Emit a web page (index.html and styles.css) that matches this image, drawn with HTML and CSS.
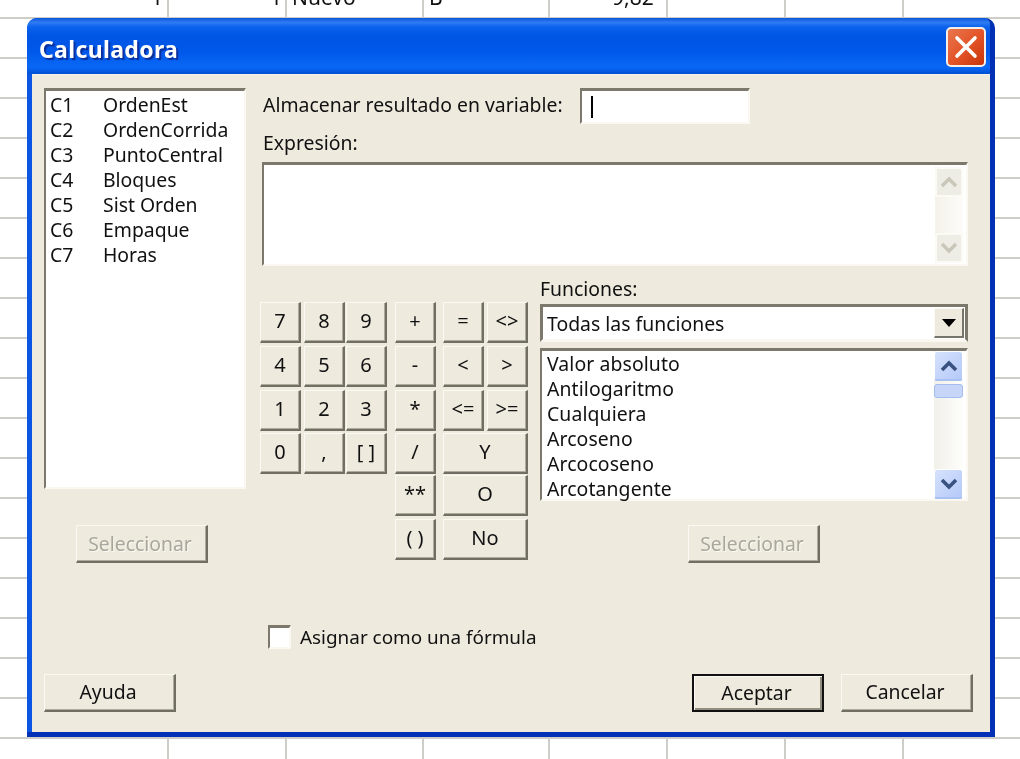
FILE: index.html
```html
<!DOCTYPE html>
<html lang="es">
<head>
  <meta charset="utf-8">
  <title>Calculadora</title>
  <link rel="stylesheet" href="styles.css">
</head>
<body>
  <div class="sheet">
    <div class="sheet-row">
      <span class="cell-a">1</span>
      <span class="cell-b">1</span>
      <span class="cell-c">Nuevo</span>
      <span class="cell-d">B</span>
      <span class="cell-e">9,82</span>
    </div>
    <div class="sheet-col col-1"></div>
    <div class="sheet-col col-2"></div>
    <div class="sheet-col col-3"></div>
    <div class="sheet-col col-4"></div>
    <div class="sheet-col col-5"></div>
    <div class="sheet-col col-6"></div>
    <div class="sheet-col col-7"></div>
  </div>

  <div class="window">
    <div class="titlebar">
      <span class="title">Calculadora</span>
      <div class="close">
        <svg width="30" height="30" viewBox="0 0 30 30">
          <path d="M6 6 L24 24 M24 6 L6 24" stroke="#fff" stroke-width="3.6" stroke-linecap="round"/>
        </svg>
      </div>
    </div>

    <div class="dialog">
      <div class="main">
        <div class="left-column">
          <ul class="sunken var-list">
            <li><span class="var-id">C1</span>OrdenEst</li>
            <li><span class="var-id">C2</span>OrdenCorrida</li>
            <li><span class="var-id">C3</span>PuntoCentral</li>
            <li><span class="var-id">C4</span>Bloques</li>
            <li><span class="var-id">C5</span>Sist Orden</li>
            <li><span class="var-id">C6</span>Empaque</li>
            <li><span class="var-id">C7</span>Horas</li>
          </ul>
          <div class="btn btn-disabled select-left">Seleccionar</div>
        </div>

        <div class="right-column">
          <div class="store-row">
            <label>Almacenar resultado en variable:</label>
            <div class="sunken store-input"><span class="caret"></span></div>
          </div>

          <label class="expr-label">Expresión:</label>
          <div class="sunken expr-box">
            <div class="scroll-off">
              <div class="arrow-off">
                <svg width="20" height="14" viewBox="0 0 20 14"><path d="M3 11 L10 4 L17 11" fill="none" stroke="#c9c7ba" stroke-width="3.4"/></svg>
              </div>
              <div class="arrow-off">
                <svg width="20" height="14" viewBox="0 0 20 14"><path d="M3 3 L10 10 L17 3" fill="none" stroke="#c9c7ba" stroke-width="3.4"/></svg>
              </div>
            </div>
          </div>

          <div class="calc-row">
            <div class="keypad">
              <div class="btn key">7</div>
              <div class="btn key">8</div>
              <div class="btn key">9</div>
              <div class="btn key">+</div>
              <div class="btn key">=</div>
              <div class="btn key">&lt;&gt;</div>
              <div class="btn key">4</div>
              <div class="btn key">5</div>
              <div class="btn key">6</div>
              <div class="btn key">-</div>
              <div class="btn key">&lt;</div>
              <div class="btn key">&gt;</div>
              <div class="btn key">1</div>
              <div class="btn key">2</div>
              <div class="btn key">3</div>
              <div class="btn key">*</div>
              <div class="btn key">&lt;=</div>
              <div class="btn key">&gt;=</div>
              <div class="btn key">0</div>
              <div class="btn key">,</div>
              <div class="btn key">[ ]</div>
              <div class="btn key">/</div>
              <div class="btn key key-wide">Y</div>
              <div class="btn key key-op">**</div>
              <div class="btn key key-wide">O</div>
              <div class="btn key key-op">( )</div>
              <div class="btn key key-wide">No</div>
            </div>

            <div class="functions">
              <label class="func-label">Funciones:</label>
              <div class="sunken func-select">
                <span>Todas las funciones</span>
                <div class="combo-btn">
                  <svg width="14" height="8" viewBox="0 0 14 8"><path d="M0 0 H14 L7 8 Z" fill="#000"/></svg>
                </div>
              </div>
              <div class="sunken func-list">
                <ul>
                  <li>Valor absoluto</li>
                  <li>Antilogaritmo</li>
                  <li>Cualquiera</li>
                  <li>Arcoseno</li>
                  <li>Arcocoseno</li>
                  <li>Arcotangente</li>
                </ul>
                <div class="scroll-on">
                  <div class="arrow-on">
                    <svg width="20" height="14" viewBox="0 0 20 14"><path d="M3 11 L10 4 L17 11" fill="none" stroke="#3a5280" stroke-width="3.6"/></svg>
                  </div>
                  <div class="thumb"></div>
                  <div class="track"></div>
                  <div class="arrow-on">
                    <svg width="20" height="14" viewBox="0 0 20 14"><path d="M3 3 L10 10 L17 3" fill="none" stroke="#3a5280" stroke-width="3.6"/></svg>
                  </div>
                </div>
              </div>
              <div class="btn btn-disabled select-right">Seleccionar</div>
            </div>
          </div>

          <div class="formula-row">
            <div class="sunken checkbox"></div>
            <label>Asignar como una fórmula</label>
          </div>
        </div>
      </div>

      <div class="footer">
        <div class="btn footer-btn">Ayuda</div>
        <div class="footer-right">
          <div class="btn footer-btn btn-default">Aceptar</div>
          <div class="btn footer-btn">Cancelar</div>
        </div>
      </div>
    </div>
  </div>
</body>
</html>
```

FILE: styles.css
```css
html, body {
  margin: 0;
  height: 100%;
}
body {
  position: relative;
  width: 1020px;
  height: 759px;
  overflow: hidden;
  background: #fff;
  font-family: "Noto Sans", "DejaVu Sans", sans-serif;
  font-size: 19.4px;
  color: #111;
}
ul {
  list-style: none;
  margin: 0;
  padding: 0;
}
label {
  display: block;
}

/* spreadsheet behind the dialog */
.sheet {
  position: absolute;
  inset: 0;
  background: repeating-linear-gradient(to bottom, transparent 0, transparent 17px, #cfcdc8 17px, #cfcdc8 19px, transparent 19px, transparent 40px);
  filter: blur(0.5px);
}
.sheet-row span {
  position: absolute;
  top: -15px;
  line-height: 24px;
  font-size: 21px;
}
.cell-a { left: 151px; }
.cell-b { left: 270px; }
.cell-c { left: 292px; }
.cell-d { left: 429px; }
.cell-e { left: 612px; }
.sheet-col {
  position: absolute;
  top: 0;
  bottom: 0;
  width: 2px;
  background: #cfcdc8;
}
.col-1 { left: 167px; }
.col-2 { left: 285px; }
.col-3 { left: 422px; }
.col-4 { left: 548px; }
.col-5 { left: 666px; }
.col-6 { left: 784px; }
.col-7 { left: 902px; }

/* window frame */
.window {
  position: absolute;
  left: 27px;
  top: 18px;
  box-sizing: border-box;
  width: 968px;
  height: 719px;
  display: flex;
  flex-direction: column;
  border-radius: 10px 10px 0 0;
  border-right: 5px solid #0030b4;
  border-bottom: 5px solid #0430b8;
  background: #0a55e4;
  filter: blur(0.5px);
}
.titlebar {
  height: 56px;
  flex-shrink: 0;
  display: flex;
  align-items: center;
  justify-content: space-between;
  padding: 0 4px 0 12px;
  border-radius: 10px 6px 0 0;
  background: linear-gradient(to bottom, #0a56dc 0, #2f7bf2 8%, #0a62ee 16%, #0055e4 32%, #0058ea 60%, #0a68f6 88%, #0050d4 100%);
}
.title {
  padding-top: 5px;
  font-weight: 700;
  font-size: 23px;
  letter-spacing: 0.35px;
  color: #fff;
  text-shadow: 2px 2px 1px #0a2f9c;
}
.close {
  width: 36px;
  height: 36px;
  margin-top: 2px;
  display: flex;
  align-items: center;
  justify-content: center;
  border: 2px solid #f4efe9;
  border-radius: 5px;
  background: linear-gradient(135deg, #e8774e 0, #e4552a 50%, #c83408 100%);
}
.dialog {
  flex: 1;
  margin-left: 5px;
  display: flex;
  flex-direction: column;
  padding: 13px 17px 21px 12px;
  background: #eeeade;
  border-top: 1px solid #f5f2ea;
}
.main {
  flex: 1;
  display: flex;
  gap: 15px;
}

/* shared widgets */
.sunken {
  box-sizing: border-box;
  background: #fff;
  border-style: solid;
  border-width: 3px 2px 2px 2px;
  border-color: #7c796c #fbf8f2 #fbf8f2 #7c796c;
}
.btn {
  box-sizing: border-box;
  display: flex;
  align-items: center;
  justify-content: center;
  background: #eeeade;
  border-style: solid;
  border-width: 1px 2px 2px 1px;
  border-color: #fbf9f3 #716f64 #716f64 #fbf9f3;
  box-shadow: inset -1px -1px 0 #aeab9c;
}
.btn-disabled {
  width: 132px;
  height: 38px;
  padding-right: 3px;
  color: #a9a79b;
  text-shadow: 1px 1px 0 #fbf9f3;
}

/* left column */
.left-column {
  width: 202px;
  display: flex;
  flex-direction: column;
  align-items: flex-start;
}
.var-list {
  width: 202px;
  height: 401px;
  padding: 1px 4px;
}
.var-list li {
  display: flex;
  height: 25px;
  line-height: 25px;
}
.var-id {
  width: 53px;
}
.select-left {
  margin: 36px 0 0 32px;
}

/* right column */
.right-column {
  flex: 1;
  display: flex;
  flex-direction: column;
}
.store-row {
  display: flex;
  align-items: center;
  height: 36px;
  padding-left: 2px;
}
.store-row label {
  width: 317px;
  margin-top: -4px;
}
.store-input {
  width: 170px;
  height: 36px;
  display: flex;
  align-items: center;
  padding-left: 9px;
}
.caret {
  width: 2px;
  height: 22px;
  background: #000;
}
.expr-label {
  height: 38px;
  padding: 5px 0 0 2px;
  line-height: 28px;
  box-sizing: border-box;
}
.expr-box {
  width: 706px;
  height: 104px;
  margin-left: 1px;
  display: flex;
  justify-content: flex-end;
  padding: 2px 3px 1px 0;
}
.scroll-off {
  width: 28px;
  display: flex;
  flex-direction: column;
  justify-content: space-between;
  background: linear-gradient(to right, #f4f2ea, #fdfcf9);
}
.arrow-off {
  box-sizing: border-box;
  height: 30px;
  display: flex;
  align-items: center;
  justify-content: center;
  background: #eeede5;
  border: 2px solid #fbfaf5;
  border-radius: 3px;
}

/* keypad and functions */
.calc-row {
  display: flex;
  margin-top: 15px;
}
.keypad {
  width: 280px;
  height: 257px;
  margin: 21px 0 0 -1px;
  display: grid;
  grid-template-columns: 44px 42px 49px 48px 44px 53px;
  grid-template-rows: 44px 44px 43px 42px 44px 40px;
  align-items: start;
  font-size: 20px;
}
.key {
  width: 41px;
  height: 41px;
  padding-bottom: 3px;
}
.key-wide {
  grid-column: span 2;
  width: 85px;
}
.key-op {
  grid-column: 4;
}
.functions {
  width: 428px;
  display: flex;
  flex-direction: column;
}
.func-label {
  height: 23px;
  line-height: 16px;
}
.func-select {
  height: 38px;
  display: flex;
  align-items: center;
  justify-content: space-between;
  padding: 0 1px 0 4px;
  border-width: 3px;
  border-color: #7c796c #7c796c #fbf8f2 #7c796c;
}
.combo-btn {
  box-sizing: border-box;
  width: 30px;
  height: 30px;
  display: flex;
  align-items: center;
  justify-content: center;
  background: #eeeade;
  border-style: solid;
  border-width: 1px 2px 2px 1px;
  border-color: #fbf9f3 #77746a #77746a #fbf9f3;
}
.func-list {
  height: 153px;
  margin-top: 6px;
  display: flex;
  justify-content: space-between;
  padding: 0 3px 0 5px;
}
.func-list li {
  height: 25px;
  line-height: 25px;
  letter-spacing: 0.1px;
}
.scroll-on {
  width: 29px;
  display: flex;
  flex-direction: column;
  background: linear-gradient(to right, #f1f0e9, #fdfdfb);
}
.arrow-on {
  box-sizing: border-box;
  height: 30px;
  display: flex;
  align-items: center;
  justify-content: center;
  background: linear-gradient(135deg, #d6e2fd, #b4c9f8);
  border: 1px solid #fff;
  border-bottom: 2px solid #a9c0f2;
  border-radius: 3px;
}
.thumb {
  height: 14px;
  margin-top: 3px;
  background: #c6d5f8;
  border: 1px solid #a5bcee;
  border-radius: 3px;
  box-sizing: border-box;
}
.track {
  flex: 1;
}
.select-right {
  margin: 24px 0 0 148px;
}
.formula-row {
  display: flex;
  align-items: center;
  margin: 62px 0 0 7px;
  height: 24px;
  gap: 9px;
}
.formula-row label {
  margin-top: -1px;
  font-size: 18.9px;
}
.checkbox {
  width: 23px;
  height: 24px;
}

/* bottom buttons */
.footer {
  display: flex;
  justify-content: space-between;
  position: relative;
  top: 1px;
}
.footer-right {
  display: flex;
  gap: 17px;
}
.footer-btn {
  width: 132px;
  height: 38px;
  padding: 0 3px 2px 0;
}
.btn-default {
  border: 2px solid #111;
  box-shadow: inset 1px 1px 0 #fbf9f3, inset -2px -2px 0 #918e80;
}
```
